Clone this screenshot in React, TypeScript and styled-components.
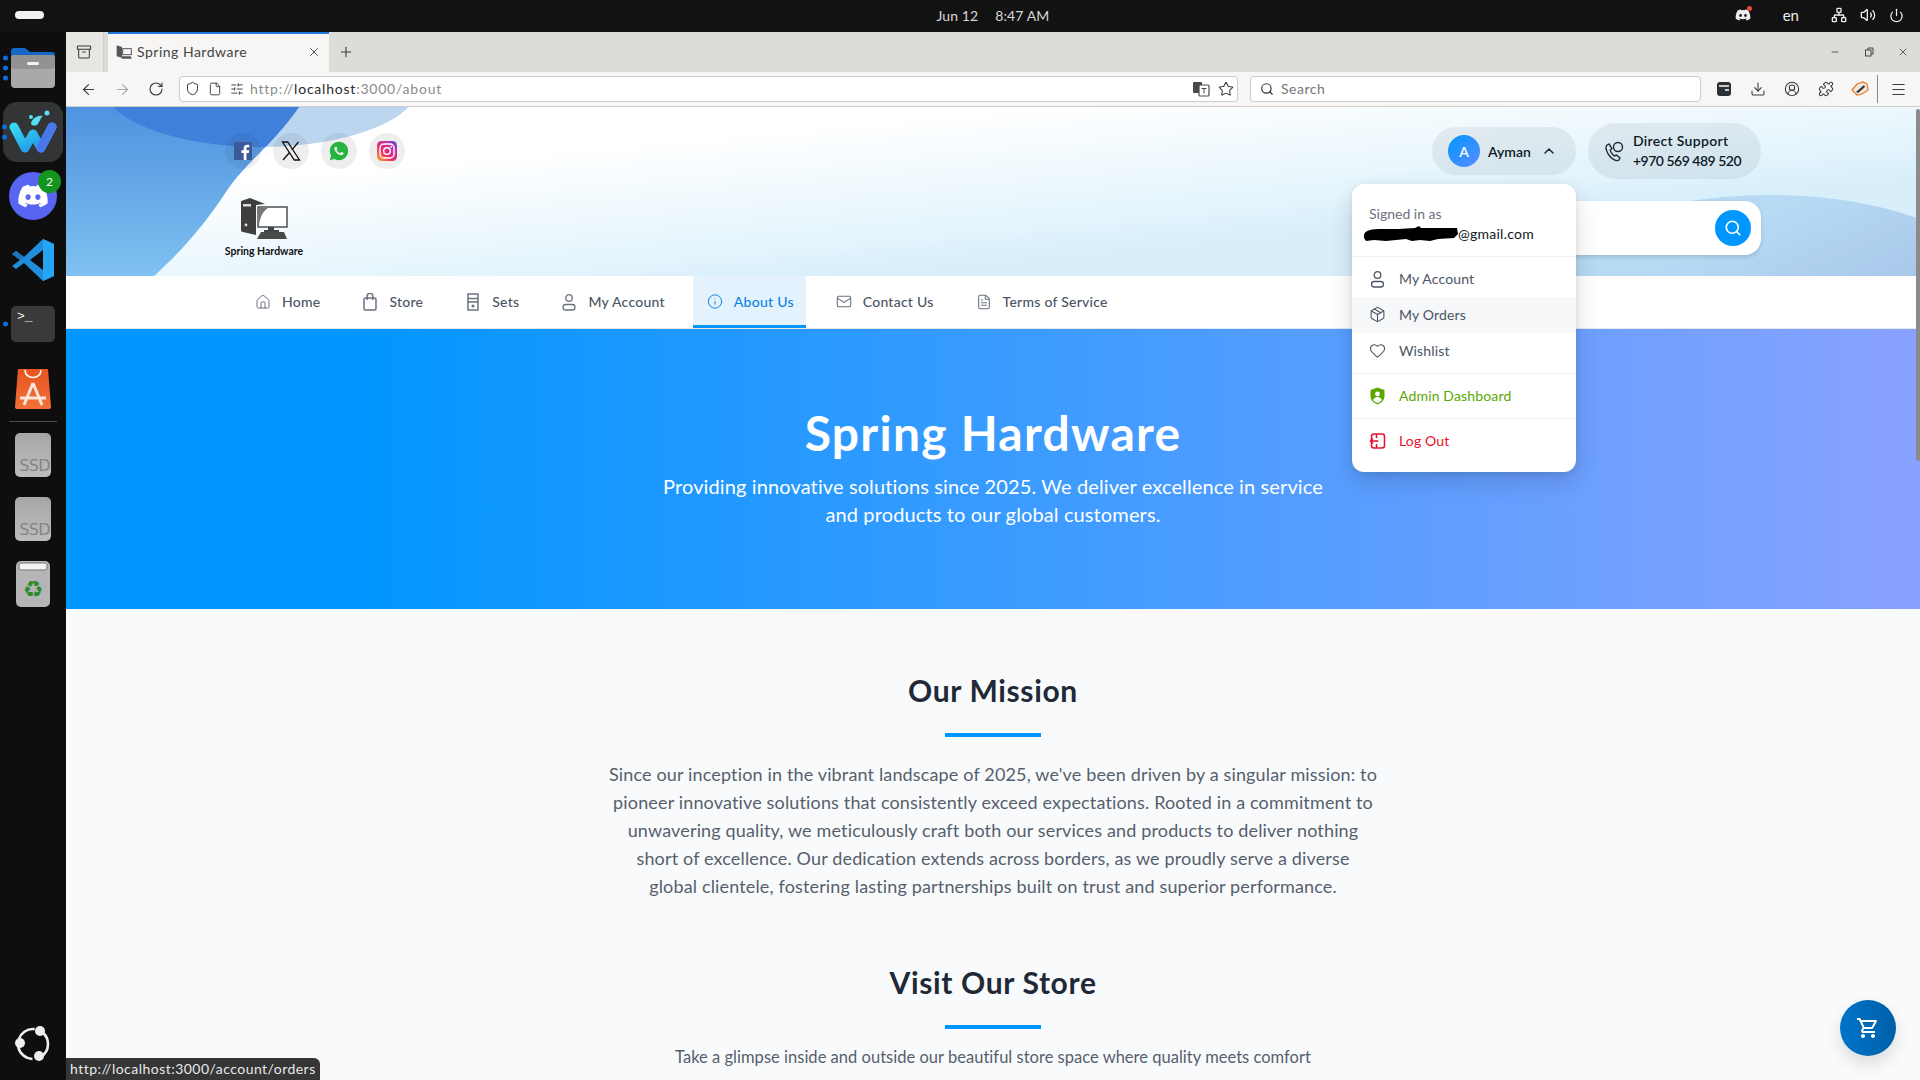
import React from "react";
import styled, { createGlobalStyle } from "styled-components";
import {
  ArrowLeft, ArrowRight, RotateCw, Star, Download, Puzzle, Menu, X, Plus, Search, File, Shield,
  House, Info, Mail, FileText, Package, Heart, ChevronUp, Minus, SlidersHorizontal,
  Volume2, Power, Network, CircleUserRound, Archive,
} from "lucide-react";
import { FaDiscord } from "react-icons/fa";
import { RiWhatsappFill } from "react-icons/ri";

const UI = `Lato, "Noto Sans", sans-serif`;

const Global = createGlobalStyle`
  html, body { margin: 0; padding: 0; background: #0e0e0e; overflow: hidden; }
  * { box-sizing: border-box; }
  #root { width: 1920px; height: 1080px; overflow: hidden; font-family: ${UI}; }
`;

const Screen = styled.div`
  width: 1920px; height: 1080px; display: flex; flex-direction: column; background: #0e0e0e;
`;

/* ---------- GNOME top bar ---------- */
const TopBar = styled.div`
  height: 32px; flex: none; background: #121212; color: #dcdcdc; padding-bottom: 2px;
  display: grid; grid-template-columns: 66px 1fr auto 1fr; align-items: center; font-size: 14px;
`;
const ActivityPill = styled.div`
  width: 29px; height: 8px; background: #f2f2f2; border-radius: 4px; margin-left: 15px;
`;
const Clock = styled.div`
  display: flex; gap: 17px; letter-spacing: 0.1px; color: #d6d6d6;
`;
const TrayRow = styled.div`
  display: flex; align-items: center; justify-content: flex-end; padding-right: 16px; color: #eee;
`;
const TrayLang = styled.span`
  margin: 0 32px 0 32px; font-size: 15px;
`;
const TrayIcons = styled.div`
  display: flex; align-items: center; gap: 13px;
`;
const DiscordTray = styled.div`
  position: relative; display: flex;
  &::after {
    content: ""; position: absolute; right: -1px; top: -1px; width: 5px; height: 5px; border-radius: 50%; background: #e8483c;
  }
`;

/* ---------- dock ---------- */
const Body = styled.div`
  flex: 1; display: flex; min-height: 0;
`;
const Dock = styled.div`
  width: 66px; flex: none; background: #0e0e0e; display: flex; flex-direction: column; align-items: center; position: relative;
`;
const DockItem = styled.div<{ $mt: number; $w: number; $h: number }>`
  position: relative; flex: none; margin-top: ${(p) => p.$mt}px; width: ${(p) => p.$w}px; height: ${(p) => p.$h}px; display: flex;
`;
const RunDots = styled.div<{ $left: number }>`
  position: absolute; left: ${(p) => p.$left}px; top: 50%; transform: translateY(-50%);
  display: flex; flex-direction: column; gap: 5px;
`;
const RunDot = styled.i`
  display: block; width: 5px; height: 5px; border-radius: 50%; background: #0a6fd8;
`;
const WaveTile = styled.div`
  width: 60px; height: 60px; border-radius: 14px; background: #333436; display: flex; align-items: center; justify-content: center;
`;
const DiscordDisc = styled.div`
  width: 48px; height: 48px; border-radius: 50%; background: #5865f2; color: #fff; display: flex; align-items: center; justify-content: center;
`;
const CountBadge = styled.div`
  position: absolute; right: -4px; top: -2px; width: 23px; height: 23px; border-radius: 50%; background: #12941f; color: #f2fff2;
  font-size: 12px; display: flex; align-items: center; justify-content: center;
`;
const TerminalTile = styled.div`
  width: 44px; height: 36px; border-radius: 5px; background: #3a3a3a; color: #f0f0f0; font: 13px/1 "Liberation Mono", monospace; padding: 4px 0 0 6px;
`;
const DockDivider = styled.div`
  width: 48px; height: 1px; background: #4a4a4a; margin-top: 12px; flex: none;
`;
const SsdTile = styled.div`
  width: 36px; height: 44px; border-radius: 5px; background: linear-gradient(#a6a6a6, #bdbdbd); color: #858585;
  font: 16px/1 "DejaVu Sans", sans-serif; display: flex; align-items: flex-end; justify-content: flex-end; padding: 0 1px 3px 0; letter-spacing: -0.6px;
`;
const UbuntuSlot = styled.div`
  margin-top: auto; margin-bottom: 18px; display: flex;
`;

/* ---------- browser chrome ---------- */
const Browser = styled.div`
  flex: 1; min-width: 0; display: flex; flex-direction: column; position: relative;
`;
const TabStrip = styled.div`
  height: 40px; flex: none; background: #dedcd8; display: flex; align-items: stretch; color: #3b3b3b;
`;
const TabListButton = styled.div`
  width: 38px; background: #e8e6e2; border-right: 1px solid #cfcdc9; display: flex; align-items: center; justify-content: center; flex: none; padding-right: 2px;
`;
const Tab = styled.div`
  margin-left: 4px; width: 221px; background: #f7f6f4; border-top: 2px solid #1f76dc; display: flex; align-items: center; padding: 0 8px 3px; gap: 5px; font-size: 14px; flex: none;
`;
const TabTitle = styled.span`
  flex: 1; color: #444; letter-spacing: 0.5px;
`;
const NewTab = styled.div`
  width: 34px; display: flex; align-items: center; justify-content: center; flex: none;
`;
const Spacer = styled.div`
  flex: 1;
`;
const WinControl = styled.div`
  width: 34px; display: flex; align-items: center; justify-content: center; flex: none; color: #444;
`;
const Toolbar = styled.div`
  height: 35px; flex: none; background: #f7f6f4; border-bottom: 1px solid #cfcdc9; display: flex; align-items: center; padding: 0 5px; color: #3c3c3c;
`;
const ToolIcon = styled.div<{ $dim?: boolean }>`
  width: 34px; height: 26px; display: flex; align-items: center; justify-content: center; flex: none; color: ${(p) => (p.$dim ? "#a9a9a9" : "#3c3c3c")};
`;
const ToolGroup = styled.div`
  display: flex; align-items: center; margin-left: 6px; flex: none;
`;
const Field = styled.div`
  height: 26px; background: #fff; border: 1px solid #cfcdc9; border-radius: 4px; display: flex; align-items: center; font-size: 14px; padding-bottom: 1px;
`;
const UrlField = styled(Field)`
  flex: 1; margin-left: 6px; padding-left: 5px; padding-right: 3px; gap: 8px;
`;
const UrlText = styled.div`
  flex: 1; color: #8a8a8a; letter-spacing: 0.78px; margin-left: -2px; white-space: nowrap;
`;
const UrlHost = styled.span`
  color: #2b2b2b;
`;
const SearchField = styled(Field)`
  width: 451px; margin-left: 12px; padding-left: 9px; gap: 7px; color: #777; flex: none; letter-spacing: 0.5px;
`;
const ToolDivider = styled.div`
  width: 1px; height: 28px; background: #8c8c8c; margin-right: 3px; flex: none;
`;

/* ---------- page ---------- */
const Page = styled.div`
  flex: 1; min-height: 0; position: relative; overflow: hidden; background: #f9fafb;
`;
const Header = styled.header`
  position: relative; height: 169px; padding: 16px 159px 0; overflow: hidden; background: #fff;
`;
const HeaderArt = styled.svg`
  position: absolute; inset: 0; width: 100%; height: 100%;
`;
const HeaderRow = styled.div<{ $mt?: number; $h: number }>`
  position: relative; display: flex; justify-content: space-between; align-items: center; margin-top: ${(p) => p.$mt ?? 0}px; height: ${(p) => p.$h}px;
`;
const Socials = styled.div`
  display: flex; gap: 12px;
`;
const SocialDisc = styled.div`
  width: 36px; height: 36px; border-radius: 50%; background: rgba(40, 40, 50, 0.08); display: flex; align-items: center; justify-content: center;
`;
const Pills = styled.div`
  display: flex; align-items: center; gap: 12px;
`;
const Pill = styled.div`
  background: rgba(40, 60, 80, 0.08); display: flex; align-items: center; color: #1f2937; font-size: 14px; font-weight: 600;
`;
const UserPill = styled(Pill)`
  width: 144px; height: 48px; border-radius: 24px; padding: 0 16px; gap: 8px;
  & > svg { flex: none; margin-right: 3px; }
`;
const Avatar = styled.div`
  width: 32px; height: 32px; border-radius: 50%; background: linear-gradient(135deg, #0096ff, #5b8cff); color: #fff; display: flex; align-items: center; justify-content: center; font-size: 14px; flex: none;
`;
const UserName = styled.span`
  flex: 1; color: #111827;
`;
const SupportPill = styled(Pill)`
  width: 173px; height: 56px; border-radius: 28px; padding: 0 0 0 16px; gap: 9px; color: #111827;
  & > svg { flex: none; }
`;
const SupportLines = styled.div`
  line-height: 20px; white-space: nowrap;
`;
const SupportLine = styled.div<{ $track: number }>`
  letter-spacing: ${(p) => p.$track}px;
`;
const Logo = styled.div`
  width: 78px; display: flex; flex-direction: column; align-items: center; gap: 5px;
`;
const LogoText = styled.div`
  font-size: 10.5px; font-weight: 700; color: #111; line-height: 14px; white-space: nowrap;
`;
const SearchBar = styled.div`
  width: 400px; height: 54px; background: #fff; border-radius: 16px; box-shadow: 0 2px 4px rgba(0, 0, 0, 0.14); display: flex; align-items: center; justify-content: flex-end; padding-right: 10px;
`;
const SearchGo = styled.div`
  width: 36px; height: 36px; border-radius: 50%; background: #0096ff; color: #fff; display: flex; align-items: center; justify-content: center;
`;

const Nav = styled.nav`
  height: 53px; background: #fff; border-bottom: 1px solid #e5e7eb; padding: 0 161px 0 175px; display: flex; gap: 16px;
`;
const NavItem = styled.div<{ $active?: boolean }>`
  height: 52px; padding: 2px 12px 0 14px; display: flex; align-items: center; gap: 11px; font-size: 14px; font-weight: 500; letter-spacing: 0.25px;
  color: ${(p) => (p.$active ? "#0a84e4" : "#4b5563")};
  background: ${(p) => (p.$active ? "#e4f2fd" : "transparent")};
  border-bottom: 3px solid ${(p) => (p.$active ? "#0096ff" : "transparent")};
  & > svg { color: ${(p) => (p.$active ? "#0a84e4" : "#6b7280")}; flex: none; width: 16px; }
`;

const Hero = styled.section`
  height: 280px; padding-top: 80px; text-align: center; color: #fff;
  background: linear-gradient(90deg, #0096ff 15%, #8aa2ff 100%);
`;
const HeroTitle = styled.h1`
  margin: 0 0 15px; font-size: 48px; line-height: 48px; font-weight: 700; letter-spacing: 1.25px;
`;
const HeroText = styled.p`
  margin: 0; font-size: 20px; line-height: 28px; font-weight: 400; letter-spacing: 0.12px;
`;
const Section = styled.section`
  padding-top: 63px; text-align: center;
`;
const SectionTitle = styled.h2`
  margin: 0; font-size: 30px; line-height: 36px; font-weight: 700; color: #1f2937; letter-spacing: 0.65px;
`;
const TitleBar = styled.div`
  width: 96px; height: 4px; background: #0096ff; margin: 25px auto 24px;
`;
const Lead = styled.p`
  margin: -1px 0 1px; font-size: 18px; line-height: 28px; font-weight: 400; color: #565f6d; white-space: nowrap; letter-spacing: 0.15px;
`;
const SubLead = styled.p`
  margin: -8px 0 0; font-size: 16.5px; line-height: 24px; font-weight: 400; color: #565f6d; white-space: nowrap; letter-spacing: 0.02px;
`;

/* ---------- overlays ---------- */
const Dropdown = styled.div`
  position: absolute; top: 77px; right: 344px; width: 224px; height: 288px; background: #fff; border-radius: 12px;
  box-shadow: 0 10px 24px rgba(0, 0, 0, 0.14), 0 2px 6px rgba(0, 0, 0, 0.08);
`;
const DropHead = styled.div`
  height: 73px; padding: 20px 17px 0; border-bottom: 1px solid #f0f1f3; font-size: 14px; line-height: 20px;
`;
const SignedIn = styled.div`
  color: #6b7280; font-weight: 400;
`;
const EmailRow = styled.div`
  display: flex; align-items: center; margin-left: -6px; color: #111827; letter-spacing: 0.25px;
  & > svg { flex: none; }
`;
const DropGroup = styled.div<{ $last?: boolean }>`
  padding: 4px 0 ${(p) => (p.$last ? 13 : 4)}px; border-bottom: ${(p) => (p.$last ? "none" : "1px solid #f0f1f3")};
`;
const DropItem = styled.div<{ $tone?: string; $hover?: boolean }>`
  height: 36px; display: flex; align-items: center; gap: 13px; padding: 0 17px 1px; font-size: 14px; letter-spacing: 0.15px;
  color: ${(p) => p.$tone ?? "#4b5563"};
  background: ${(p) => (p.$hover ? "#f7f8fa" : "transparent")};
  & > svg { flex: none; width: 17px; }
`;
const CartFab = styled.div`
  position: absolute; right: 24px; bottom: 24px; width: 56px; height: 56px; border-radius: 50%;
  background: linear-gradient(90deg, #0073c8, #005fa8); color: #fff; display: flex; align-items: center; justify-content: center;
  box-shadow: 0 8px 16px rgba(0, 0, 0, 0.12);
`;
const ScrollThumb = styled.div`
  position: absolute; right: 0; top: 2px; width: 4px; height: 352px; background: #8b8b8b; border-radius: 2px;
`;
const StatusTip = styled.div`
  position: absolute; left: 0; bottom: 0; height: 22px; width: 254px; padding: 0 4px; background: #363636; color: #e8e8e8; border-top-right-radius: 6px;
  font-size: 14px; line-height: 22px; white-space: nowrap; letter-spacing: 0.47px;
`;

/* ---------- drawings ---------- */
const WaveMark = () => (
  <svg width="50" height="46" viewBox="0 0 50 46" fill="none">
    <defs>
      <linearGradient id="wv" x1="0" x2="1" y1="0" y2="1"><stop offset="0" stopColor="#36d8f2" /><stop offset="1" stopColor="#1c8be6" /></linearGradient>
    </defs>
    <path d="M6 18 L17 39 L25 25 L33 39 L44 18" stroke="url(#wv)" strokeWidth="9" strokeLinecap="round" strokeLinejoin="round" />
    <path d="M33 39 L44 18" stroke="#4a78ec" strokeWidth="9" strokeLinecap="round" />
    <path d="M23 14c2-6 8-8 12-7-3 2-3 6-6 9-2 1-6 1-6-2z" fill="#57dff0" />
    <circle cx="39" cy="4" r="2.5" fill="#57dff0" />
    <circle cx="23" cy="8" r="2" fill="#57dff0" />
  </svg>
);
const FolderMark = () => (
  <svg width="44" height="41" viewBox="0 0 44 41">
    <path d="M0 4a3 3 0 0 1 3-3h11l5 4h22a3 3 0 0 1 3 3v14H0z" fill="#1668c8" />
    <rect y="8" width="44" height="33" rx="4" fill="#a9a9a9" />
    <rect y="8" width="44" height="14" rx="4" fill="#929292" />
    <rect x="16" y="15" width="12" height="3" rx="1.5" fill="#f0f0f0" />
  </svg>
);
const CodeMark = () => (
  <svg width="42" height="42" viewBox="0 0 42 42">
    <path d="M31 0 42 5v32l-11 5L12 24 4 30 0 27l8-6-8-6 4-3 8 6z" fill="#1f8fdc" />
    <path d="M31 0 42 5v32l-11 5z" fill="#26a6f2" />
    <path d="M31 11 18 21l13 10z" fill="#0e0e0e" />
    <path d="M12 18 4 12 0 15l8 6z" fill="#1a76b8" />
  </svg>
);
const StoreMark = () => (
  <svg width="36" height="42" viewBox="0 0 36 42">
    <defs><linearGradient id="as" x1="0" x2="0" y1="0" y2="1"><stop offset="0" stopColor="#e8541f" /><stop offset="1" stopColor="#f2703a" /></linearGradient></defs>
    <path d="M3 2h30l3 38a2 2 0 0 1-2 2H2a2 2 0 0 1-2-2z" fill="url(#as)" />
    <path d="M10 3c0 10 16 10 16 0" fill="none" stroke="#fff" strokeWidth="1.6" />
    <path d="M18 16 9 38M18 16l9 22M5 31h26" stroke="#fbe6dc" strokeWidth="3" fill="none" />
  </svg>
);
const TrashMark = () => (
  <svg width="36" height="46" viewBox="0 0 36 46">
    <rect x="1" y="0" width="34" height="46" rx="5" fill="#b5b5b5" />
    <rect x="4" y="2" width="28" height="7" rx="2" fill="#f2f2f2" stroke="#777" />
    <text x="18" y="36" textAnchor="middle" fontSize="23" fontFamily="DejaVu Sans" fill="#2d8a2d">♻</text>
  </svg>
);
const UbuntuMark = () => (
  <svg width="36" height="36" viewBox="0 0 36 36">
    <circle cx="18" cy="18" r="15" fill="none" stroke="#eee" strokeWidth="2.6" strokeDasharray="20 8" strokeDashoffset="4" />
    <circle cx="25" cy="5" r="5" fill="#eee" />
    <circle cx="5" cy="17" r="5" fill="#eee" />
    <circle cx="24" cy="30" r="5" fill="#eee" />
  </svg>
);
const Favicon = () => (
  <svg width="16" height="16" viewBox="0 0 48 40"><path d="M2 0l16 5v32L2 33z" fill="#555" /><rect x="20" y="10" width="26" height="18" fill="none" stroke="#555" strokeWidth="3" /><path d="M18 33h26l3 7H17z" fill="#555" /></svg>
);
const ComputerLogo = () => (
  <svg width="48" height="41" viewBox="0 0 48 41">
    <path d="M1 3 10 0l15 6-9 1v30L3 34a2 2 0 0 1-2-2z" fill="#3f3f3f" />
    <rect x="3" y="6" width="8" height="2.5" fill="#ddd" />
    <circle cx="6" cy="27" r="1.4" fill="#ddd" />
    <rect x="18" y="9" width="29" height="20" fill="#fff" stroke="#444" strokeWidth="1.4" />
    <path d="M19 28c1-8 3-14 9-18h-9z" fill="#777" />
    <path d="M28 29h6v3h5v2H24v-2h4z" fill="#444" />
    <path d="M21 34h23l3 7H17z" fill="#4a4a4a" />
  </svg>
);
const Scribble = () => (
  <svg width="95" height="16" viewBox="0 0 95 16">
    <path d="M1 9C2 4 8 3 20 3c10 0 20 0 32-1l4-2 2 2h36l1 6-4 4-16 1-8 2-10-1-8 1-6-2-20 2-12-1-8 1C4 15 0 13 1 9z" fill="#000" />
  </svg>
);
const FacebookMark = () => (
  <svg width="18" height="18" viewBox="0 0 18 18">
    <rect width="18" height="18" fill="#3c5a9a" />
    <path d="M12.500 18v-7h2.300l.4-2.700h-2.700V6.600c0-.8.2-1.300 1.300-1.300h1.500V2.900c-.3 0-1.100-.1-2.100-.1-2.100 0-3.500 1.300-3.500 3.600v1.900H7.400V11h2.300v7z" fill="#fff" />
  </svg>
);
const XMark = () => (
  <svg width="20" height="20" viewBox="0 0 20 20" fill="none" stroke="#111" strokeWidth="1.300">
    <path d="M1.500 1h5.200l11.800 18h-5.200z" />
    <path d="M17.500 1 10.800 8.800M8.800 11.200 2 19" />
  </svg>
);
const InstaMark = () => (
  <svg width="20" height="20" viewBox="0 0 20 20" fill="none">
    <defs>
      <linearGradient id="ig" x1="0" y1="1" x2="1" y2="0">
        <stop offset="0" stopColor="#fdb32a" /><stop offset=".4" stopColor="#ee2a6b" /><stop offset=".75" stopColor="#c02fb0" /><stop offset="1" stopColor="#4f5bd5" />
      </linearGradient>
    </defs>
    <rect width="20" height="20" rx="4.500" fill="url(#ig)" />
    <rect x="3" y="3" width="14" height="14" rx="4" stroke="#fff" strokeWidth="1.400" />
    <circle cx="10" cy="10" r="3.300" stroke="#fff" strokeWidth="1.400" />
    <circle cx="14.200" cy="5.800" r="1" fill="#fff" />
  </svg>
);
const BagIcon = () => (
  <svg width="16" height="18" viewBox="0 0 16 18" fill="none" stroke="currentColor" strokeWidth="1.500"><rect x="2" y="5" width="12" height="12" rx="1.500" /><path d="M5.200 7V3a2.800 2.800 0 0 1 5.600 0v4" /></svg>
);
const TowerIcon = () => (
  <svg width="16" height="18" viewBox="0 0 16 18" fill="none" stroke="currentColor" strokeWidth="1.500"><rect x="3" y="1" width="10" height="16" /><path d="M3 5.500h10M3 9h10" /><circle cx="8" cy="13" r=".8" fill="currentColor" /></svg>
);
const PersonIcon = () => (
  <svg width="16" height="18" viewBox="0 0 16 18" fill="none" stroke="currentColor" strokeWidth="1.300"><circle cx="8" cy="5" r="3.300" /><rect x="2" y="11.500" width="12" height="5.500" rx="2.750" /></svg>
);
const AdminShield = () => (
  <svg width="16" height="18" viewBox="0 0 16 18"><path d="M8 .5 15 3v6c0 4-3 7-7 8.500C4 16 1 13 1 9V3z" fill="#5aa700" /><circle cx="8" cy="7" r="2.400" fill="#fff" /><path d="M3.500 13c1-2 2.500-3 4.500-3s3.500 1 4.500 3c-1 1.300-2.800 2.400-4.500 3-1.700-.6-3.500-1.700-4.500-3z" fill="#fff" /></svg>
);
const LogoutIcon = () => (
  <svg width="16" height="18" viewBox="0 0 16 18" fill="none" stroke="#e8112d" strokeWidth="1.500"><rect x="2" y="2" width="13" height="14" rx="2.500" /><path d="M0.800 9h8M3.500 6.500 1 9l2.500 2.500M7 2v4M7 12v4" /></svg>
);
const SupportIcon = () => (
  <svg width="20" height="21" viewBox="0 0 20 21" fill="none" stroke="#1f2937" strokeWidth="1.400"><path d="M5 3 2.500 4.500C1 7 3 12 6 15.500s7 5 9 3.500l1-2-3.500-3-2 1c-1.500-.5-4-4-4.300-6l1.800-1.500z" /><circle cx="14" cy="6" r="4.500" /></svg>
);
const ContainerIcon = () => (
  <svg width="16" height="16" viewBox="0 0 16 16"><rect x="1" y="1" width="14" height="14" rx="3" fill="#2b2f36" /><path d="M3 5h10M9 9h4" stroke="#fff" strokeWidth="1.300" /></svg>
);
const FoxExt = () => (
  <svg width="18" height="16" viewBox="0 0 18 16"><path d="M1 9 6 3l6-2 4 2 1 6-6 4-5 1z" fill="#f3e8da" stroke="#e07b2a" strokeWidth="1.200" /><path d="M5 11 13 4l1 2-7 6z" fill="#333" /></svg>
);
const TranslateIcon = () => (
  <svg width="18" height="16" viewBox="0 0 18 16"><rect x="1" y="1" width="9" height="11" rx="1" fill="#4a4a4a" /><rect x="7" y="4" width="10" height="11" rx="1" fill="#fff" stroke="#4a4a4a" strokeWidth="1.200" /><path d="M9.500 7.500h5M12 7.500v5" stroke="#4a4a4a" /></svg>
);
const CartIcon = () => (
  <svg width="24" height="24" viewBox="0 0 24 24" fill="currentColor"><path d="M15.550 13c.75 0 1.410-.41 1.750-1.030l3.580-6.490c.37-.66-.11-1.480-.87-1.480H5.210l-.94-2H1v2h2l3.600 7.590-1.350 2.440C4.520 15.370 5.480 17 7 17h12v-2H7l1.100-2h7.450zM6.160 6h12.150l-2.760 5H8.530L6.160 6zM7 18c-1.100 0-1.990.9-1.990 2S5.900 22 7 22s2-.9 2-2-.9-2-2-2zm10 0c-1.100 0-1.990.9-1.990 2s.89 2 1.990 2 2-.9 2-2-.9-2-2-2z" /></svg>
);

export default function App() {
  return (
    <>
      <Global />
      <Screen>
        <TopBar>
          <ActivityPill />
          <div />
          <Clock><span>Jun 12</span><span>8:47 AM</span></Clock>
          <TrayRow>
            <DiscordTray><FaDiscord size={16} /></DiscordTray>
            <TrayLang>en</TrayLang>
            <TrayIcons>
              <Network size={16} />
              <Volume2 size={16} />
              <Power size={15} />
            </TrayIcons>
          </TrayRow>
        </TopBar>
        <Body>
          <Dock>
            <DockItem $mt={15} $w={44} $h={41}><RunDots $left={-8}><RunDot /><RunDot /><RunDot /></RunDots><FolderMark /></DockItem>
            <DockItem $mt={14} $w={60} $h={60}><RunDots $left={-1}><RunDot /><RunDot /></RunDots><WaveTile><WaveMark /></WaveTile></DockItem>
            <DockItem $mt={10} $w={48} $h={48}><DiscordDisc><FaDiscord size={32} /></DiscordDisc><CountBadge>2</CountBadge></DockItem>
            <DockItem $mt={19} $w={42} $h={42}><CodeMark /></DockItem>
            <DockItem $mt={25} $w={44} $h={36}><RunDots $left={-8}><RunDot /></RunDots><TerminalTile>&gt;_</TerminalTile></DockItem>
            <DockItem $mt={25} $w={36} $h={42}><StoreMark /></DockItem>
            <DockDivider />
            <DockItem $mt={11} $w={36} $h={44}><SsdTile>SSD</SsdTile></DockItem>
            <DockItem $mt={20} $w={36} $h={44}><SsdTile>SSD</SsdTile></DockItem>
            <DockItem $mt={20} $w={36} $h={46}><TrashMark /></DockItem>
            <UbuntuSlot><UbuntuMark /></UbuntuSlot>
          </Dock>
          <Browser>
            <TabStrip>
              <TabListButton><Archive size={16} strokeWidth={1.6} /></TabListButton>
              <Tab>
                <Favicon />
                <TabTitle>Spring Hardware</TabTitle>
                <X size={14} strokeWidth={1.5} />
              </Tab>
              <NewTab><Plus size={16} strokeWidth={1.6} /></NewTab>
              <Spacer />
              <WinControl><Minus size={10} /></WinControl>
              <WinControl><svg width="10" height="10" viewBox="0 0 10 10" fill="none" stroke="currentColor"><rect x="1.500" y="3" width="5.500" height="6" /><path d="M4 3V1h5v6H7" /></svg></WinControl>
              <WinControl><X size={12} strokeWidth={1.6} /></WinControl>
            </TabStrip>
            <Toolbar>
              <ToolIcon><ArrowLeft size={17} strokeWidth={1.6} /></ToolIcon>
              <ToolIcon $dim><ArrowRight size={17} strokeWidth={1.6} /></ToolIcon>
              <ToolIcon><RotateCw size={16} strokeWidth={1.7} /></ToolIcon>
              <UrlField>
                <Shield size={15} strokeWidth={1.6} />
                <File size={14} strokeWidth={1.6} />
                <SlidersHorizontal size={14} strokeWidth={1.6} />
                <UrlText>http://<UrlHost>localhost</UrlHost>:3000/about</UrlText>
                <TranslateIcon />
                <Star size={16} strokeWidth={1.6} />
              </UrlField>
              <SearchField><Search size={14} strokeWidth={2} color="#333" /><span>Search</span></SearchField>
              <ToolGroup>
                <ToolIcon><ContainerIcon /></ToolIcon>
                <ToolIcon><Download size={16} strokeWidth={1.6} /></ToolIcon>
                <ToolIcon><CircleUserRound size={16} strokeWidth={1.6} /></ToolIcon>
                <ToolIcon><Puzzle size={16} strokeWidth={1.6} /></ToolIcon>
                <ToolIcon><FoxExt /></ToolIcon>
                <ToolDivider />
                <ToolIcon><Menu size={17} strokeWidth={1.6} /></ToolIcon>
              </ToolGroup>
            </Toolbar>
            <Page>
              <Header>
                <HeaderArt viewBox="0 0 1854 169" preserveAspectRatio="none">
                  <defs>
                    <linearGradient id="base" x1="0.22" y1="0.2" x2="0.72" y2="0.7">
                      <stop offset="0.1" stopColor="#ffffff" /><stop offset="0.8" stopColor="#e3f4fc" /><stop offset="1" stopColor="#d8eefb" />
                    </linearGradient>
                    <linearGradient id="leftb" x1="0" y1="0" x2="0" y2="1">
                      <stop offset="0" stopColor="#4f93e0" /><stop offset="1" stopColor="#7fc1f0" />
                    </linearGradient>
                    <linearGradient id="rightb" x1="0" y1="0" x2="1" y2="1">
                      <stop offset="0.3" stopColor="#b6daf4" /><stop offset="1" stopColor="#94aedb" />
                    </linearGradient>
                    <clipPath id="leftclip"><path d="M0 0H233C205 40 180 55 160 85 140 115 120 140 88 169H0z" /></clipPath>
                  </defs>
                  <rect width="1854" height="169" fill="url(#base)" />
                  <ellipse cx="1704" cy="198" rx="240" ry="110" fill="url(#rightb)" />
                  <ellipse cx="195" cy="-22" rx="158" ry="62" fill="#bcd6f0" />
                  <path d="M0 0H233C205 40 180 55 160 85 140 115 120 140 88 169H0z" fill="url(#leftb)" />
                  <ellipse cx="195" cy="-22" rx="158" ry="62" fill="#3f80da" clipPath="url(#leftclip)" />
                </HeaderArt>
                <HeaderRow $h={56}>
                  <Socials>
                    <SocialDisc><FacebookMark /></SocialDisc>
                    <SocialDisc><XMark /></SocialDisc>
                    <SocialDisc><RiWhatsappFill size={22} color="#27b43e" /></SocialDisc>
                    <SocialDisc><InstaMark /></SocialDisc>
                  </Socials>
                  <Pills>
                    <UserPill>
                      <Avatar>A</Avatar>
                      <UserName>Ayman</UserName>
                      <ChevronUp size={16} strokeWidth={2.2} />
                    </UserPill>
                    <SupportPill>
                      <SupportIcon />
                      <SupportLines>
                        <SupportLine $track={0.3}>Direct Support</SupportLine>
                        <SupportLine $track={-0.5}>+970 569 489 520</SupportLine>
                      </SupportLines>
                    </SupportPill>
                  </Pills>
                </HeaderRow>
                <HeaderRow $mt={19} $h={60}>
                  <Logo><ComputerLogo /><LogoText>Spring Hardware</LogoText></Logo>
                  <SearchBar><SearchGo><Search size={18} strokeWidth={2.2} /></SearchGo></SearchBar>
                </HeaderRow>
              </Header>
              <Nav>
                <NavItem><House size={16} strokeWidth={1.5} />Home</NavItem>
                <NavItem><BagIcon />Store</NavItem>
                <NavItem><TowerIcon />Sets</NavItem>
                <NavItem><PersonIcon />My Account</NavItem>
                <NavItem $active><Info size={17} strokeWidth={1.5} />About Us</NavItem>
                <NavItem><Mail size={17} strokeWidth={1.6} />Contact Us</NavItem>
                <NavItem><FileText size={16} strokeWidth={1.6} />Terms of Service</NavItem>
              </Nav>
              <Hero>
                <HeroTitle>Spring Hardware</HeroTitle>
                <HeroText>Providing innovative solutions since 2025. We deliver excellence in service<br />and products to our global customers.</HeroText>
              </Hero>
              <Section>
                <SectionTitle>Our Mission</SectionTitle>
                <TitleBar />
                <Lead>
                  Since our inception in the vibrant landscape of 2025, we've been driven by a singular mission: to<br />
                  pioneer innovative solutions that consistently exceed expectations. Rooted in a commitment to<br />
                  unwavering quality, we meticulously craft both our services and products to deliver nothing<br />
                  short of excellence. Our dedication extends across borders, as we proudly serve a diverse<br />
                  global clientele, fostering lasting partnerships built on trust and superior performance.
                </Lead>
              </Section>
              <Section>
                <SectionTitle>Visit Our Store</SectionTitle>
                <TitleBar />
                <SubLead>Take a glimpse inside and outside our beautiful store space where quality meets comfort</SubLead>
              </Section>

              <Dropdown>
                <DropHead>
                  <SignedIn>Signed in as</SignedIn>
                  <EmailRow><Scribble />@gmail.com</EmailRow>
                </DropHead>
                <DropGroup>
                  <DropItem><PersonIcon />My Account</DropItem>
                  <DropItem $hover><Package size={17} strokeWidth={1.5} />My Orders</DropItem>
                  <DropItem><Heart size={17} strokeWidth={1.5} />Wishlist</DropItem>
                </DropGroup>
                <DropGroup>
                  <DropItem $tone="#5aa700"><AdminShield />Admin Dashboard</DropItem>
                </DropGroup>
                <DropGroup $last>
                  <DropItem $tone="#e8112d"><LogoutIcon />Log Out</DropItem>
                </DropGroup>
              </Dropdown>
              <CartFab><CartIcon /></CartFab>
              <ScrollThumb />
              <StatusTip>http://localhost:3000/account/orders</StatusTip>
            </Page>
          </Browser>
        </Body>
      </Screen>
    </>
  );
}
